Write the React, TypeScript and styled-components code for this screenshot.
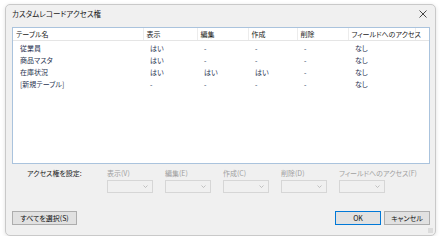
import styled, { createGlobalStyle } from "styled-components";

interface IRow {
  name: string;
  values: string[];
}

const columns = [
  { label: "テーブル名", width: 130 },
  { label: "表示", width: 54 },
  { label: "編集", width: 51 },
  { label: "作成", width: 49 },
  { label: "削除", width: 51 },
  { label: "フィールドへのアクセス", width: 67 },
];

const rows: IRow[] = [
  { name: "従業員", values: ["はい", "-", "-", "-", "なし"] },
  { name: "商品マスタ", values: ["はい", "-", "-", "-", "なし"] },
  { name: "在庫状況", values: ["はい", "はい", "はい", "-", "なし"] },
  { name: "[新規テーブル]", values: ["-", "-", "-", "-", "なし"] },
];

const settings = ["表示(V)", "編集(E)", "作成(C)", "削除(D)", "フィールドへのアクセス(F)"];

function Chevron() {
  return (
    <svg width="5" height="3" viewBox="0 0 5 3">
      <polyline points="0.5,0.5 2.5,2.5 4.5,0.5" fill="none" stroke="#b4b4b4" strokeWidth="0.8" />
    </svg>
  );
}

function CloseIcon() {
  return (
    <svg width="8" height="8" viewBox="0 0 8 8">
      <path d="M0.5 0.5 L7.5 7.5 M7.5 0.5 L0.5 7.5" stroke="#333" strokeWidth="0.9" />
    </svg>
  );
}

function App() {
  return (
    <>
      <GlobalStyle />
      <Dialog>
        <TitleBar>
          <Title>カスタムレコードアクセス権</Title>
          <CloseButton>
            <CloseIcon />
          </CloseButton>
        </TitleBar>
        <Body>
          <ListBox>
            <Table>
              <colgroup>
                {columns.map((c) => (
                  <col key={c.label} style={{ width: c.width }} />
                ))}
                <col />
              </colgroup>
              <thead>
                <tr>
                  {columns.map((c) => (
                    <HeadCell key={c.label}>{c.label}</HeadCell>
                  ))}
                  <HeadFiller />
                </tr>
              </thead>
              <tbody>
                <SpacerRow>
                  <td colSpan={7} />
                </SpacerRow>
                {rows.map((r) => (
                  <tr key={r.name}>
                    <Cell>{r.name}</Cell>
                    {r.values.map((v, i) => (
                      <Cell key={i}>{v}</Cell>
                    ))}
                    <td />
                  </tr>
                ))}
              </tbody>
            </Table>
          </ListBox>
          <SettingsRow>
            <SettingsLabel>アクセス権を設定:</SettingsLabel>
            {settings.map((s) => (
              <Field key={s}>
                <FieldLabel>{s}</FieldLabel>
                <Select>
                  <Chevron />
                </Select>
              </Field>
            ))}
          </SettingsRow>
          <ButtonRow>
            <Button $width={65}>すべてを選択(S)</Button>
            <RightButtons>
              <Button $width={46} $primary>OK</Button>
              <Button $width={46}>キャンセル</Button>
            </RightButtons>
          </ButtonRow>
        </Body>
        <Grip />
      </Dialog>
    </>
  );
}

export default App;

const GlobalStyle = createGlobalStyle`
  body {
    margin: 0;
    background: #ffffff;
    font-family: "Noto Sans CJK JP", "Noto Sans", sans-serif;
    font-feature-settings: "palt";
    font-size: 7px;
    color: #222;
  }
`;

const Dialog = styled.div`
  position: relative;
  margin: 4px 0 0 5px;
  width: 431px;
  height: 232px;
  box-sizing: border-box;
  background: #f0f0f0;
  border: 1px solid #c9c9c9;
  border-radius: 5px;
  box-shadow: 0 1px 4px rgba(0, 0, 0, 0.12);
  display: flex;
  flex-direction: column;
`;

const TitleBar = styled.div`
  height: 22px;
  box-sizing: border-box;
  display: flex;
  align-items: flex-start;
  justify-content: space-between;
  padding: 4px 8px 0 6px;
`;

const Title = styled.div`
  font-size: 7.5px;
  line-height: 10px;
  color: #1a1a1a;
`;

const CloseButton = styled.div`
  display: flex;
  align-items: center;
  height: 10px;
`;

const Body = styled.div`
  padding: 0 5px 0 6px;
  display: flex;
  flex-direction: column;
`;

const ListBox = styled.div`
  height: 137px;
  box-sizing: border-box;
  background: #ffffff;
  border: 1px solid #aac3dd;
`;

const Table = styled.table`
  border-collapse: collapse;
  table-layout: fixed;
  width: 100%;
  line-height: 12px;
`;

const HeadCell = styled.th`
  height: 12px;
  padding: 0 0 0 3px;
  text-align: left;
  font-weight: normal;
  color: #222;
  white-space: nowrap;
  border-bottom: 1px solid #e5e5e5;
  border-right: 1px solid #ececec;
`;

const HeadFiller = styled.th`
  border-bottom: 1px solid #e5e5e5;
`;

const SpacerRow = styled.tr`
  height: 1px;
  td {
    padding: 0;
    height: 1px;
  }
`;

const Cell = styled.td`
  height: 12px;
  padding: 0 0 0 7px;
  color: #2a3552;
  white-space: nowrap;
`;

const SettingsRow = styled.div`
  display: flex;
  padding: 5px 0 0 15px;
`;

const SettingsLabel = styled.div`
  width: 80px;
  line-height: 9px;
  color: #222;
`;

const Field = styled.div`
  width: 58px;
  display: flex;
  flex-direction: column;
  gap: 2px;
`;

const FieldLabel = styled.div`
  line-height: 9px;
  color: #a0a0a0;
  white-space: nowrap;
`;

const Select = styled.div`
  width: 46px;
  height: 13px;
  box-sizing: border-box;
  background: #f0f0f0;
  border: 1px solid #d6d6d6;
  display: flex;
  align-items: center;
  justify-content: flex-end;
  padding-right: 4px;
`;

const ButtonRow = styled.div`
  display: flex;
  justify-content: space-between;
  margin-top: 18px;
`;

const RightButtons = styled.div`
  display: flex;
  gap: 3px;
`;

const Button = styled.div<{ $width: number; $primary?: boolean }>`
  width: ${(p) => p.$width}px;
  height: 14px;
  box-sizing: border-box;
  background: #e1e1e1;
  border: 1px solid ${(p) => (p.$primary ? "#0078d7" : "#adadad")};
  display: flex;
  align-items: center;
  justify-content: center;
  color: #111;
`;

const Grip = styled.div`
  position: absolute;
  right: 2px;
  bottom: 2px;
  width: 5px;
  height: 5px;
  background-image: radial-gradient(circle, #c4c4c4 0.6px, transparent 0.8px);
  background-size: 2px 2px;
`;
